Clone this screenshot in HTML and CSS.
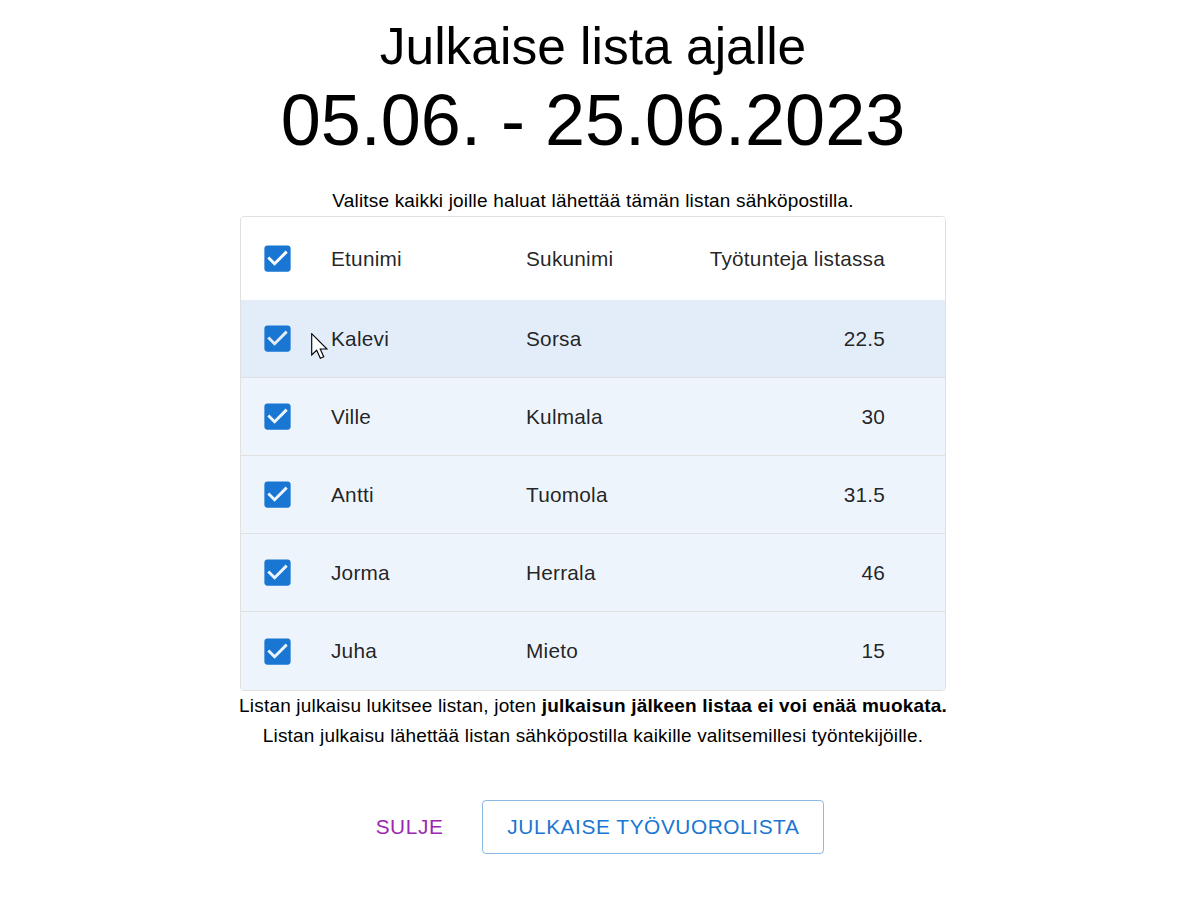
FILE: index.html
```html
<!DOCTYPE html>
<html lang="fi">
<head>
<meta charset="utf-8">
<title>Julkaise lista</title>
<link rel="stylesheet" href="styles.css">
</head>
<body>
<main class="page">
  <h1 class="title">Julkaise lista ajalle</h1>
  <h2 class="dates">05.06. - 25.06.2023</h2>
  <p class="intro">Valitse kaikki joille haluat lähettää tämän listan sähköpostilla.</p>

  <div class="table">
    <div class="row head">
      <span class="cb"><svg viewBox="0 0 24 24"><path d="M19 3H5c-1.11 0-2 .9-2 2v14c0 1.1.89 2 2 2h14c1.11 0 2-.9 2-2V5c0-1.1-.89-2-2-2zm-9 14l-5-5 1.410-1.41L10 14.17l7.59-7.59L19 8l-9 9z"/></svg></span>
      <span>Etunimi</span><span>Sukunimi</span><span class="num">Työtunteja listassa</span>
    </div>
    <div class="row sel hover">
      <span class="cb"><svg viewBox="0 0 24 24"><path d="M19 3H5c-1.11 0-2 .9-2 2v14c0 1.1.89 2 2 2h14c1.11 0 2-.9 2-2V5c0-1.1-.89-2-2-2zm-9 14l-5-5 1.41-1.41L10 14.17l7.59-7.59L19 8l-9 9z"/></svg></span>
      <span>Kalevi</span><span>Sorsa</span><span class="num">22.5</span>
      <svg class="cursor" viewBox="0 0 12 19" preserveAspectRatio="none"><path d="M0.5 0.5 L0.5 16 L4 12.6 L6.6 18.4 L9 17.4 L6.5 11.7 L11.3 11.7 Z" fill="#fff" stroke="#000" stroke-width="0.8" stroke-linejoin="miter"/></svg>
    </div>
    <div class="row sel">
      <span class="cb"><svg viewBox="0 0 24 24"><path d="M19 3H5c-1.11 0-2 .9-2 2v14c0 1.1.89 2 2 2h14c1.11 0 2-.9 2-2V5c0-1.1-.89-2-2-2zm-9 14l-5-5 1.41-1.41L10 14.17l7.59-7.59L19 8l-9 9z"/></svg></span>
      <span>Ville</span><span>Kulmala</span><span class="num">30</span>
    </div>
    <div class="row sel">
      <span class="cb"><svg viewBox="0 0 24 24"><path d="M19 3H5c-1.11 0-2 .9-2 2v14c0 1.1.89 2 2 2h14c1.11 0 2-.9 2-2V5c0-1.1-.89-2-2-2zm-9 14l-5-5 1.41-1.41L10 14.17l7.59-7.59L19 8l-9 9z"/></svg></span>
      <span>Antti</span><span>Tuomola</span><span class="num">31.5</span>
    </div>
    <div class="row sel">
      <span class="cb"><svg viewBox="0 0 24 24"><path d="M19 3H5c-1.11 0-2 .9-2 2v14c0 1.1.89 2 2 2h14c1.11 0 2-.9 2-2V5c0-1.1-.89-2-2-2zm-9 14l-5-5 1.41-1.41L10 14.17l7.59-7.59L19 8l-9 9z"/></svg></span>
      <span>Jorma</span><span>Herrala</span><span class="num">46</span>
    </div>
    <div class="row sel last">
      <span class="cb"><svg viewBox="0 0 24 24"><path d="M19 3H5c-1.11 0-2 .9-2 2v14c0 1.1.89 2 2 2h14c1.11 0 2-.9 2-2V5c0-1.1-.89-2-2-2zm-9 14l-5-5 1.41-1.41L10 14.17l7.59-7.59L19 8l-9 9z"/></svg></span>
      <span>Juha</span><span>Mieto</span><span class="num">15</span>
    </div>
  </div>

  <p class="note">Listan julkaisu lukitsee listan, joten <strong>julkaisun jälkeen listaa ei voi enää muokata.</strong></p>
  <p class="note">Listan julkaisu lähettää listan sähköpostilla kaikille valitsemillesi työntekijöille.</p>

  <div class="actions">
    <button class="btn text">SULJE</button>
    <button class="btn outlined">JULKAISE TYÖVUOROLISTA</button>
  </div>
</main>
</body>
</html>
```

FILE: styles.css
```css
* { box-sizing: border-box; }
html, body { margin: 0; padding: 0; background: #fff; }
body { font-family: "Liberation Sans", Arial, Helvetica, sans-serif; color: #000; }

.page {
  display: flex;
  flex-direction: column;
  align-items: center;
  padding: 16px 0 0 9px;
}

.title {
  margin: 0;
  font-size: 51.5px;
  font-weight: 400;
  line-height: 60px;
}
.dates {
  margin: 0;
  font-size: 72px;
  font-weight: 400;
  line-height: 88px;
}
.intro {
  margin: 25px 0 3px;
  font-size: 16px;
  line-height: 24px;
  letter-spacing: 0.00938em;
  font-size: 19px;
}

.table {
  width: 706px;
  border: 1px solid #e0e0e0;
  border-radius: 4px;
  overflow: hidden;
  color: rgba(0,0,0,0.87);
  font-size: 20.8px;
  letter-spacing: 0.01071em;
}
.row {
  position: relative;
  display: grid;
  grid-template-columns: 90px 195px 1fr auto;
  align-items: center;
  height: 78px;
  padding-right: 60px;
  border-bottom: 1px solid #e0e0e0;
  line-height: 24px;
}
.row.head { height: 83px; border-bottom: none; background: #fff; }
.row.sel { background: #edf4fb; }
.row.sel.hover { background: #e3edf9; }
.row.last { border-bottom: none; }
.num { text-align: right; }

.cb {
  display: flex;
  padding-left: 19px;
}
.cb svg { width: 35px; height: 35px; fill: #1976d2; }

.cursor {
  position: absolute;
  left: 70px;
  top: 33px;
  width: 17px;
  height: 26px;
}

.note {
  margin: 0;
  font-size: 19px;
  line-height: 30px;
  letter-spacing: 0.00938em;
}

.actions {
  display: flex;
  align-items: center;
  gap: 39px;
  margin-top: 49px;
  padding-left: 14px;
}
.btn {
  font-family: "Liberation Sans", Arial, Helvetica, sans-serif;
  font-size: 20.8px;
  letter-spacing: 0.02857em;
  background: transparent;
  border-radius: 4px;
  cursor: pointer;
  line-height: 26px;
}
.btn.text {
  border: none;
  color: #9c27b0;
  padding: 14px 0;
}
.btn.outlined {
  border: 1px solid rgba(25,118,210,0.5);
  color: #1976d2;
  padding: 13px 24px;
  height: 54px;
}
```
